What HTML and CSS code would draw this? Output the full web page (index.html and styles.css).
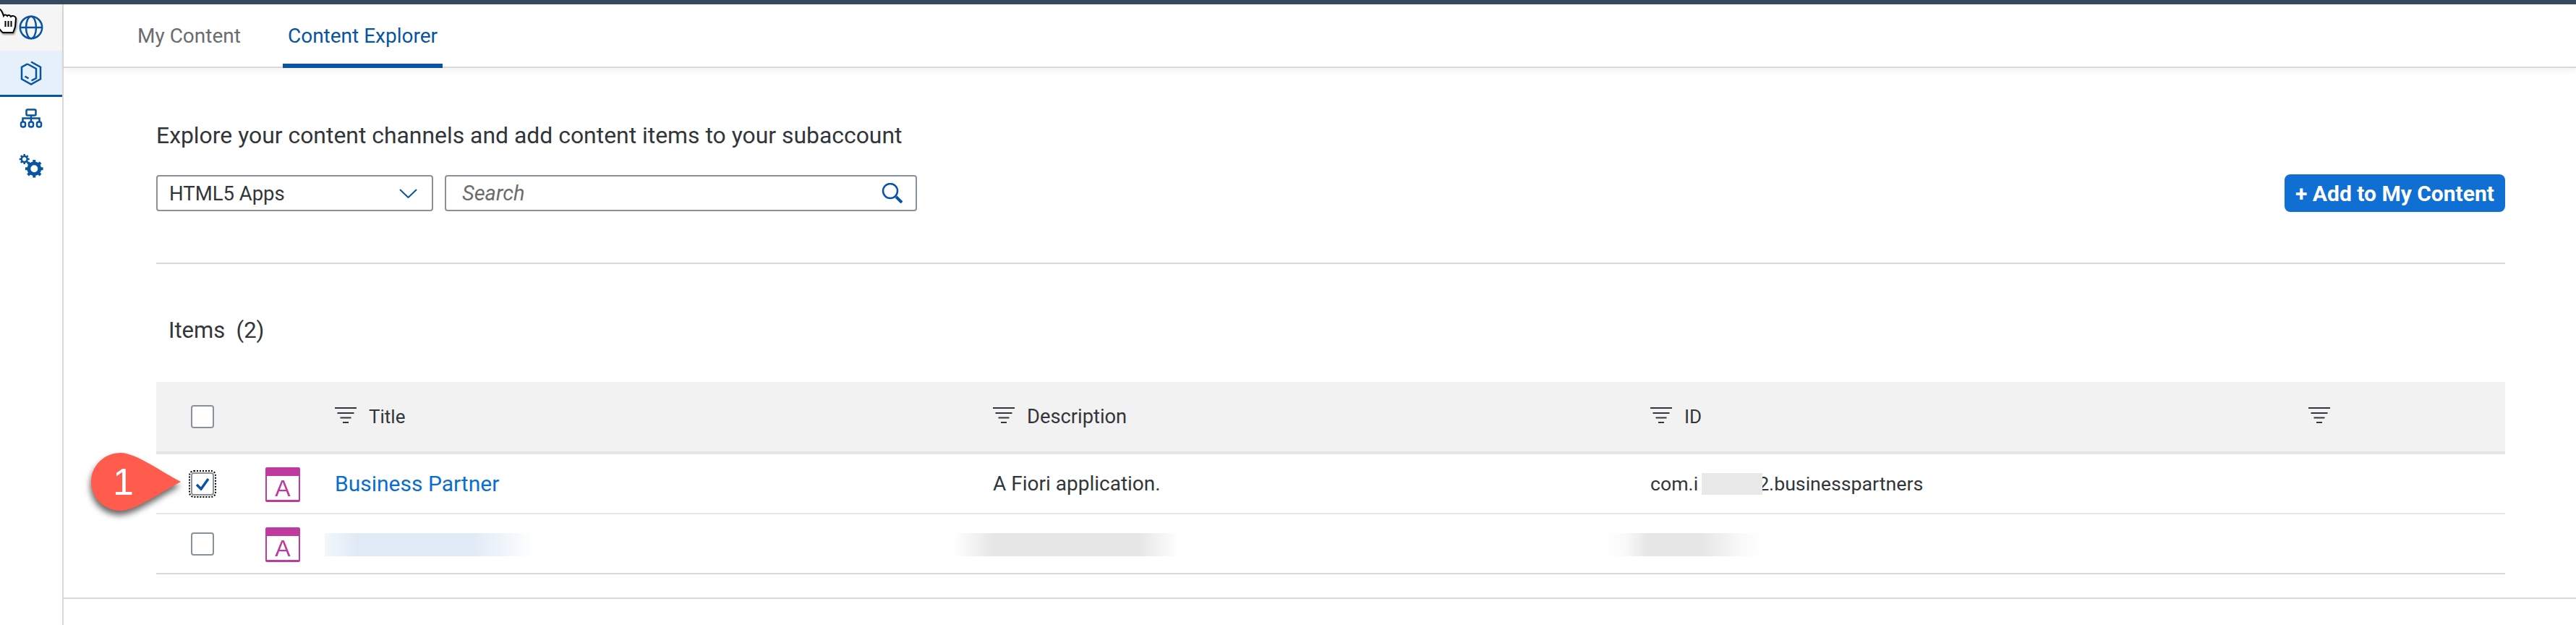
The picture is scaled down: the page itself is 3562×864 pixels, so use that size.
FILE: index.html
```html
<!DOCTYPE html>
<html lang="en">
<head>
    <meta charset="UTF-8">
    <title>Content Explorer</title>
    <link rel="stylesheet" href="styles.css">
</head>
<body>
    <div class="topbar"></div>

    <div class="shell">
        <nav class="sidebar">
            <a class="nav-item nav-first">
                <svg class="nav-icon" viewBox="0 0 36 36"><circle cx="18" cy="18" r="15.200"/><ellipse cx="18" cy="18" rx="7" ry="15.200"/><path d="M3 18h30"/></svg>
            </a>
            <a class="nav-item nav-active">
                <svg class="nav-icon" viewBox="0 0 36 36"><path d="M18 2.500l13 7.200v16.600L18 33.500 5 26.300V9.700l8-4.300"/><path d="M13 5.500l12 6.500v13l-6.500 3.500M9.500 22.500l5 3"/></svg>
            </a>
            <a class="nav-item">
                <svg class="nav-icon" viewBox="0 0 36 36"><rect x="11.500" y="3.500" width="13" height="8" rx="1.500"/><path d="M18 11.500v8.500M18 15.500H6.500v4.500M18 15.500h11.500v4.500"/><rect x="4" y="20.500" width="6" height="7" rx="2.500"/><rect x="15" y="20.500" width="6" height="7" rx="2.500"/><rect x="26" y="20.500" width="6" height="7" rx="2.500"/></svg>
            </a>
            <a class="nav-item">
                <svg class="nav-icon" viewBox="0 0 36 36">
                    <circle cx="8.700" cy="8" r="4"/>
                    <path class="gear-small" d="M8.700 1v3M8.700 12v3M1.700 8h3M12.700 8h3M3.800 3.100l2 2M11.600 10.900l2 2M13.600 3.100l-2 2M5.800 10.900l-2 2"/>
                    <circle class="gear-big" cx="22.300" cy="21.300" r="7.500"/>
                    <path class="gear-teeth" d="M22.300 9v4M22.300 29.600v4M10 21.300h4M30.600 21.300h4M13.600 12.600l2.800 2.800M28.200 27.200l2.800 2.800M31 12.600l-2.800 2.800M16.400 27.200L13.600 30"/>
                </svg>
            </a>
        </nav>

        <div class="main">
            <header class="tabs">
                <a class="tab">My Content</a>
                <a class="tab tab-active">Content Explorer</a>
            </header>

            <section class="content">
                <p class="intro">Explore your content channels and add content items to your subaccount</p>

                <div class="toolbar">
                    <div class="field select-field">
                        <span>HTML5 Apps</span>
                        <svg class="chevron" viewBox="0 0 25 13"><path d="M1 1l11.500 11L24 1"/></svg>
                    </div>
                    <div class="field search-field">
                        <span>Search</span>
                        <svg class="search-icon" viewBox="0 0 30 28"><circle cx="12" cy="11" r="10"/><path class="search-handle" d="M20 19l8 8"/></svg>
                    </div>
                    <button class="add-btn">+ Add to My Content</button>
                </div>

                <hr class="divider">

                <h2 class="items-title">Items&nbsp; (2)</h2>

                <div class="table">
                    <div class="row row-head">
                        <div class="cell cell-check"><span class="checkbox"></span></div>
                        <div class="cell"></div>
                        <div class="cell"><svg class="filter-icon" viewBox="0 0 30 22"><path d="M0 1h30M3.500 8h23M7.500 14.500h15M11 21h8"/></svg>Title</div>
                        <div class="cell cell-desc"><svg class="filter-icon" viewBox="0 0 30 22"><path d="M0 1h30M3.500 8h23M7.500 14.500h15M11 21h8"/></svg>Description</div>
                        <div class="cell"><svg class="filter-icon" viewBox="0 0 30 22"><path d="M0 1h30M3.500 8h23M7.500 14.500h15M11 21h8"/></svg>ID</div>
                        <div class="cell"><svg class="filter-icon" viewBox="0 0 30 22"><path d="M0 1h30M3.500 8h23M7.500 14.500h15M11 21h8"/></svg></div>
                    </div>

                    <div class="row">
                        <div class="cell cell-check">
                            <span class="checkbox checkbox-focus">
                                <svg class="check-mark" viewBox="0 0 20 18"><path d="M2 10l6 6L18 2"/></svg>
                            </span>
                        </div>
                        <div class="cell"><span class="app-icon"><span>A</span></span></div>
                        <div class="cell"><a class="link">Business Partner</a></div>
                        <div class="cell cell-body">A Fiori application.</div>
                        <div class="cell cell-id">com.i<span class="redact"></span>2.businesspartners</div>
                        <div class="cell"></div>
                    </div>

                    <div class="row row-last">
                        <div class="cell cell-check"><span class="checkbox"></span></div>
                        <div class="cell"><span class="app-icon"><span>A</span></span></div>
                        <div class="cell"><span class="smudge smudge-blue"></span></div>
                        <div class="cell"><span class="smudge smudge-gray-a"></span></div>
                        <div class="cell"><span class="smudge smudge-gray-b"></span></div>
                        <div class="cell"></div>
                    </div>
                </div>
            </section>

            <div class="footer-line"></div>
        </div>
    </div>

    <!-- annotation and mouse pointer sit over the page -->
    <div class="callout">
        <svg class="callout-shape" viewBox="0 0 124 80"><path d="M41 0C62 0 100 28 124 40C100 52 62 80 41 80C18 80 0 62 0 40C0 18 18 0 41 0Z"/></svg>
        <span class="callout-num">1</span>
    </div>

    <svg class="cursor" viewBox="0 0 26 34">
        <path d="M0 0c3 0 5 4 7 10 1-2 3-2 5 0 1-2 4-1 5 1 2-2 6-1 7 2l-1 12c-1 3-2 6-3 8H6c-2-1-4-4-6-7V0z"/>
        <path class="cursor-lines" d="M9.500 17v8M13.500 17v8M17.500 17v8"/>
    </svg>
</body>
</html>
```

FILE: styles.css
```css
/* Reset */
* {
    margin: 0;
    padding: 0;
    box-sizing: border-box;
}

body {
    font-family: Roboto, "Liberation Sans", sans-serif;
    background: #fff;
    color: #32363a;
    width: 3562px;
    height: 864px;
    overflow: hidden;
    position: relative;
}

.topbar {
    height: 6px;
    background: #354a5f;
}

.shell {
    display: flex;
    height: 858px;
}

/* Side navigation */
.sidebar {
    width: 88px;
    flex-shrink: 0;
    border-right: 2px solid #d9d9d9;
}

.nav-item {
    display: flex;
    align-items: center;
    justify-content: center;
    height: 64px;
}

.nav-first {
    background: #f5f5f5;
}

.nav-active {
    background: #e5f0fa;
    border-bottom: 3px solid #0854a0;
}

.nav-icon {
    width: 36px;
    height: 36px;
    fill: none;
    stroke: #0854a0;
    stroke-width: 2.500;
}

.gear-big {
    stroke-width: 5;
}

.gear-teeth {
    stroke-width: 4;
}

/* Tabs */
.main {
    flex: 1;
    display: flex;
    flex-direction: column;
}

.tabs {
    display: flex;
    height: 88px;
    padding-left: 102px;
    gap: 58px;
    border-bottom: 2px solid #d9d9d9;
    box-shadow: 0 4px 8px rgba(0, 0, 0, 0.05);
}

.tab {
    height: 88px;
    line-height: 88px;
    font-size: 28px;
    color: #6a6d70;
}

.tab-active {
    padding: 0 7px;
    color: #0854a0;
    border-bottom: 6px solid #0854a0;
    border-radius: 6px 6px 0 0;
}

/* Content */
.content {
    padding: 73px 98px 0 128px;
}

.intro {
    font-size: 31.900px;
    line-height: 40px;
}

.toolbar {
    display: flex;
    align-items: center;
    height: 52px;
    margin-top: 34px;
}

.field {
    display: flex;
    align-items: center;
    justify-content: space-between;
    height: 50px;
    background: #fff;
    border: 2px solid #89919a;
    border-radius: 4px;
    font-size: 27.500px;
}

.select-field {
    width: 383px;
    padding: 0 20px 0 16px;
}

.search-field {
    width: 653px;
    margin-left: 16px;
    padding: 0 17px 0 22px;
    font-size: 29px;
    font-style: italic;
    color: #6a6d70;
}

.chevron {
    width: 25px;
    height: 13px;
    fill: none;
    stroke: #0854a0;
    stroke-width: 2;
}

.search-icon {
    width: 30px;
    height: 28px;
    fill: none;
    stroke: #0854a0;
    stroke-width: 2.500;
}

.search-handle {
    stroke-width: 4;
}

.add-btn {
    margin-left: auto;
    width: 305px;
    height: 52px;
    background: #0f6fd3;
    color: #fff;
    border: none;
    border-radius: 8px;
    font-family: inherit;
    font-size: 30px;
    font-weight: 700;
}

.divider {
    height: 2px;
    margin-top: 70px;
    border: none;
    background: #d9d9d9;
}

.items-title {
    margin-top: 72px;
    padding-left: 17px;
    font-size: 31px;
    font-weight: 400;
    line-height: 40px;
}

/* Table */
.table {
    margin-top: 51px;
}

.row {
    display: grid;
    grid-template-columns: 151px 96px 910px 909px 910px 1fr;
    height: 83px;
    border-bottom: 2px solid #e5e5e5;
    font-size: 26px;
}

.row-head {
    height: 100px;
    background: #f2f2f2;
    border-bottom: 4px solid #e5e5e5;
}

.row-last {
    border-bottom-color: #d9d9d9;
}

.cell {
    display: flex;
    align-items: center;
}

.cell-check {
    padding-left: 48px;
}

.cell-desc {
    font-size: 27.300px;
}

.cell-body {
    font-size: 28px;
}

.cell-id {
    font-size: 26.700px;
}

.checkbox {
    display: flex;
    align-items: center;
    justify-content: center;
    width: 32px;
    height: 32px;
    background: #fff;
    border: 2px solid #89919a;
    border-radius: 4px;
}

.checkbox-focus {
    outline: 2px dotted #000;
    outline-offset: 1px;
}

.check-mark {
    width: 20px;
    height: 18px;
    fill: none;
    stroke: #0854a0;
    stroke-width: 3.500;
}

.filter-icon {
    width: 30px;
    height: 22px;
    margin: 0 17px 5px 0;
    fill: none;
    stroke: #32363a;
    stroke-width: 2;
}

.app-icon {
    display: flex;
    align-items: center;
    justify-content: center;
    width: 48px;
    height: 48px;
    margin-top: 3px;
    border: 2px solid #c0399f;
    border-top-width: 12px;
    border-bottom-width: 3px;
    border-radius: 2px;
    color: #c0399f;
    font-family: "Liberation Sans", sans-serif;
    font-size: 32px;
    line-height: 1;
}

.app-icon span {
    filter: blur(0.500px);
}

.link {
    color: #0a6ed1;
    font-size: 30px;
}

.redact {
    position: relative;
    z-index: 1;
    width: 84px;
    height: 30px;
    margin: 0 -6px 0 5px;
    background: #e8e8e8;
}

/* Blurred out values */
.smudge {
    display: block;
    height: 32px;
    margin-top: 3px;
}

.smudge-blue {
    width: 290px;
    margin-left: -14px;
    background: linear-gradient(90deg, #f3f7fc, #e0eaf6 15%, #e0eaf6 70%, #ffffff);
}

.smudge-gray-a {
    width: 312px;
    margin-left: -55px;
    background: linear-gradient(90deg, #ffffff, #e6e6e6 18%, #e6e6e6 82%, #ffffff);
}

.smudge-gray-b {
    width: 223px;
    margin-left: -62px;
    background: linear-gradient(90deg, #ffffff, #fafafa 12%, #e6e6e6 26%, #e6e6e6 60%, #fafafa 85%, #ffffff);
}

.footer-line {
    height: 2px;
    margin-top: 32px;
    background: #d9d9d9;
}

/* Step annotation */
.callout {
    position: absolute;
    left: 126px;
    top: 626px;
    width: 124px;
    height: 80px;
}

.callout-shape {
    display: block;
    width: 124px;
    height: 80px;
    fill: #ff5c4d;
    filter: drop-shadow(-1px 6px 4px rgba(0, 0, 0, 0.6));
}

.callout-num {
    position: absolute;
    left: 30px;
    top: 11px;
    font-family: "Liberation Sans", sans-serif;
    font-size: 52px;
    line-height: 58px;
    color: #fff;
}

/* Mouse pointer */
.cursor {
    position: absolute;
    left: -2px;
    top: 12px;
    width: 26px;
    height: 34px;
    fill: #fff;
    stroke: #000;
    stroke-width: 2;
    filter: drop-shadow(1px 2px 1px rgba(0, 0, 0, 0.4));
}

.cursor-lines {
    fill: none;
}
```
